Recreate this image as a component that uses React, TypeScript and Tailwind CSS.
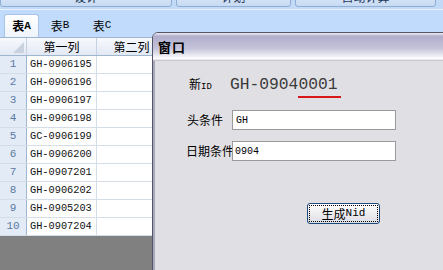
import React from 'react';

const rows = [
    'GH-0906195', 'GH-0906196', 'GH-0906197', 'GH-0906198', 'GC-0906199',
    'GH-0906200', 'GH-0907201', 'GH-0906202', 'GH-0905203', 'GH-0907204',
];

const mono = "font-['Liberation_Mono','Noto_Sans_CJK_SC',monospace]";
const cjk = "font-['Noto_Sans_CJK_SC','Liberation_Sans',sans-serif]";

function TopButton({ label, w }: { label: string; w: string }) {
    return (
        <div className={`${w} h-[21px] -mt-[14px] flex items-center justify-center rounded-b-[3px] border border-[#8eaed6] bg-[linear-gradient(to_bottom,#e4effc,#c8dbf3)] text-[12px] text-[#1e395b] ${cjk}`}>
            {label}
        </div>
    );
}

export default function App() {
    return (
        <div className={`relative w-[443px] h-[270px] overflow-hidden bg-[#808080] ${cjk}`}>
            {/* top command buttons, cut off at the top edge */}
            <div className="h-[10px] bg-[#c2d9f7] border-b border-[#e8f1fc] flex gap-[4px] overflow-hidden">
                <TopButton label="设计" w="w-[172px]" />
                <TopButton label="计划" w="w-[115px]" />
                <TopButton label="自动计算" w="w-[141px]" />
            </div>

            {/* sheet tabs */}
            <div className="h-[27px] bg-[#c0dbfc] flex items-end pl-[4px] text-[12px] text-black">
                <div className="w-[35px] h-[23px] rounded-t-[3px] border border-b-0 border-[#a9c4e6] bg-[linear-gradient(to_bottom,#ffffff,#eef4fc)] flex items-center justify-center font-bold">
                    表<span className={`${mono} text-[11px]`}>A</span>
                </div>
                <div className="w-[42px] h-[23px] flex items-center justify-center">
                    表<span className={`${mono} text-[11px]`}>B</span>
                </div>
                <div className="w-[42px] h-[23px] flex items-center justify-center">
                    表<span className={`${mono} text-[11px]`}>C</span>
                </div>
            </div>

            {/* data grid */}
            <div className="w-[260px] bg-white border-t border-[#9eb6ce]">
                <div className="flex h-[18px] bg-[linear-gradient(to_bottom,#f7f9fd,#e2e9f4)] border-b border-[#9eb6ce] text-[12px]">
                    <div className="relative w-[27px] border-r border-[#c5d2e4]">
                        <div className="absolute right-[2px] bottom-[2px] w-0 h-0 border-l-[11px] border-l-transparent border-b-[11px] border-b-[#c9d3e0]" />
                    </div>
                    <div className="w-[70px] border-r border-[#c5d2e4] flex items-center justify-center">第一列</div>
                    <div className="w-[70px] border-r border-[#c5d2e4] flex items-center justify-center">第二列</div>
                </div>
                {rows.map((r, i) => (
                    <div key={i} className="flex h-[18px] border-b border-[#d5dde9]">
                        <div className={`w-[27px] bg-[#e3ebf6] border-r border-[#9eb6ce] flex items-center justify-center text-[11px] text-[#5b7aa3] ${mono}`}>
                            {i + 1}
                        </div>
                        <div className={`w-[70px] border-r border-[#d5dde9] flex items-center pl-[3px] text-[10.3px] text-[#111] ${mono}`}>
                            {r}
                        </div>
                        <div className="w-[70px] border-r border-[#d5dde9]" />
                    </div>
                ))}
            </div>

            {/* floating dialog window */}
            <div className="absolute left-[152px] top-[32px] w-[300px] h-[250px] rounded-tl-[6px] border border-[#55556a] bg-[#e0dfe3] flex flex-col overflow-hidden">
                <div className="h-[28px] shrink-0 flex items-center pl-[5px] bg-[linear-gradient(to_bottom,#eeeef4_0%,#b0aecb_12%,#c4c3da_55%,#f2f2f7_85%,#ffffff_92%,#b9b8c8_100%)]">
                    <span className="text-[13px] font-bold text-black tracking-[1px]">窗口</span>
                </div>
                <div className="flex-1 flex flex-col border-l-[2px] border-[#a9a8b8] pl-[31px] text-[12px] text-black">
                    <div className="flex items-center h-[28px] mt-[10px]">
                        <div className="w-[44px] pl-[3px] flex items-baseline">
                            新<span className={`${mono} text-[9px]`}>ID</span>
                        </div>
                        <div className={`${mono} text-[16.3px] text-[#3a3a3a] leading-none`}>
                            GH-0904<span className="border-b-2 border-[#d81818] pr-[3px] pb-[2px]">0001</span>
                        </div>
                    </div>
                    <div className="flex items-center h-[20px] mt-[11px]">
                        <div className="w-[46px] pl-[1px]">头条件</div>
                        <div className={`w-[164px] h-[20px] border border-[#9a9a9a] bg-white flex items-center pl-[3px] text-[10px] ${mono}`}>GH</div>
                    </div>
                    <div className="flex items-center h-[20px] mt-[11px]">
                        <div className="w-[46px] whitespace-nowrap">日期条件</div>
                        <div className={`w-[164px] h-[20px] border border-[#9a9a9a] bg-white flex items-center pl-[2px] text-[10px] ${mono}`}>0904</div>
                    </div>
                    <div className="flex mt-[42px] pl-[121px]">
                        <div className="w-[73px] h-[21px] rounded-[3px] border border-[#1c4a7a] bg-[linear-gradient(to_bottom,#ffffff,#dcdce4)] p-[1px]">
                            <div className="h-full border border-dotted border-black flex items-center justify-center text-[12px]">
                                生成<span className={`${mono} text-[11px]`}>Nid</span>
                            </div>
                        </div>
                    </div>
                </div>
            </div>
        </div>
    );
}
